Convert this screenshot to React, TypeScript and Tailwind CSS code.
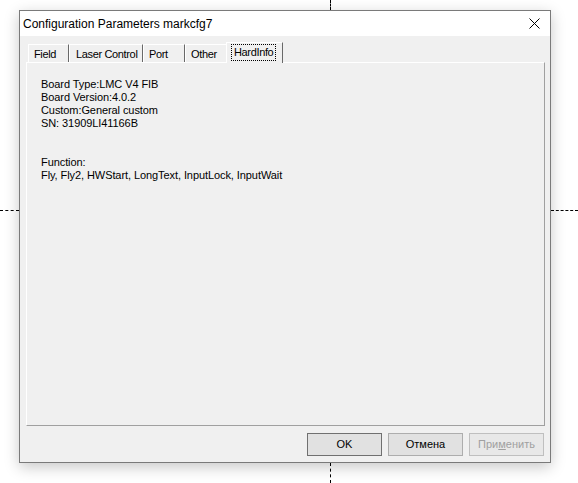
import React from "react";

const body = { fontFamily: '"Liberation Sans", Arial, sans-serif' } as React.CSSProperties;

function Tab({ label, w, pl, selected }: { label: string; w: number; pl: number; selected?: boolean }) {
  if (selected) {
    return (
      <div
        className="relative z-10 -mx-[2px] flex h-[21px] items-center whitespace-nowrap border-l border-t border-r border-l-white border-t-white border-r-[#696969] bg-[#f0f0f0] pb-[2px]"
        style={{ width: w, paddingLeft: pl }}
      >
        <span className="border border-dotted border-black px-[2px] py-[1px] leading-[13px]">{label}</span>
      </div>
    );
  }
  return (
    <div
      className="mt-[2px] flex h-[19px] items-center whitespace-nowrap border-l border-t border-r border-l-white border-t-white border-r-[#696969] pt-[1px]"
      style={{ width: w, paddingLeft: pl }}
    >
      {label}
    </div>
  );
}

function Btn({ label, variant }: { label: React.ReactNode; variant: "def" | "normal" | "disabled" }) {
  const cls =
    variant === "def"
      ? "border-[#707070] bg-[#e1e1e1] text-black"
      : variant === "disabled"
      ? "border-[#bfbfbf] bg-[#e8e8e8] text-[#a0a0a0]"
      : "border-[#adadad] bg-[#e1e1e1] text-black";
  return (
    <div className={"flex h-[23px] w-[75px] items-center justify-center border text-[11px] " + cls}>{label}</div>
  );
}

export default function App() {
  return (
    <div className="relative h-[483px] w-[578px] overflow-hidden bg-white" style={body}>
      {/* canvas guide lines */}
      <div className="absolute left-[330px] top-0 h-[10px] border-l border-dashed border-black" />
      <div className="absolute left-[330px] top-[463px] h-[20px] border-l border-dashed border-black" />
      <div className="absolute left-0 top-[210px] w-[19px] border-t border-dashed border-black" />
      <div className="absolute left-[551px] top-[210px] w-[27px] border-t border-dashed border-black" />

      <div className="pl-[19px] pt-[10px]">
        <div className="relative flex h-[453px] w-[532px] flex-col border border-[#7a7a7a] bg-[#f0f0f0] shadow-[0_4px_14px_rgba(0,0,0,0.22)]">
          {/* title bar */}
          <div className="flex h-[25px] items-center justify-between bg-white pl-[3px] pr-[9px]">
            <span className="text-[12px] text-black">Configuration Parameters markcfg7</span>
            <svg width="11" height="11" viewBox="0 0 11 11" className="mr-[1px]">
              <path d="M0.5 0.5 L10.5 10.5 M10.5 0.5 L0.5 10.5" stroke="#000" strokeWidth="1" />
            </svg>
          </div>

          {/* body */}
          <div className="flex flex-1 flex-col px-[6px] pt-[6px]">
            <div className="flex pl-[2px] text-[11px] tracking-[-0.35px] text-black">
              <Tab label="Field" w={41} pl={5} />
              <Tab label="Laser Control" w={74} pl={6} />
              <Tab label="Port" w={42} pl={5} />
              <Tab label="Other" w={43} pl={5} />
              <Tab label="HardInfo" w={57} pl={4} selected />
            </div>
            <div className="-mt-[1px] h-[364px] w-[519px] border border-l-white border-t-white border-r-[#a0a0a0] border-b-[#a0a0a0] pl-[14px] pt-[15px] text-[11px] leading-[13px] tracking-[-0.08px] text-black">
              <div>Board Type:LMC V4 FIB</div>
              <div>Board Version:4.0.2</div>
              <div>Custom:General custom</div>
              <div>SN: 31909LI41166B</div>
              <div className="h-[26px]" />
              <div>Function:</div>
              <div>Fly, Fly2, HWStart, LongText, InputLock, InputWait</div>
            </div>
            <div className="mt-[7px] flex justify-end gap-[6px]">
              <Btn label="OK" variant="def" />
              <Btn label="Отмена" variant="normal" />
              <Btn
                label={
                  <span>
                    При<span className="underline">м</span>енить
                  </span>
                }
                variant="disabled"
              />
            </div>
          </div>
        </div>
      </div>
    </div>
  );
}
